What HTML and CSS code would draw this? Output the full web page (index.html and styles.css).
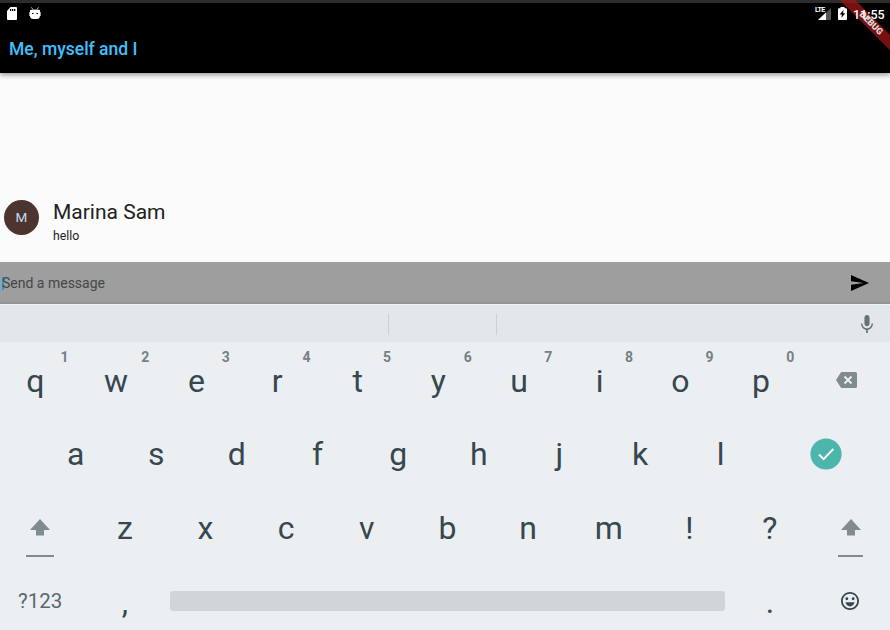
FILE: index.html
```html
<!DOCTYPE html>
<html lang="en">
<head>
<meta charset="utf-8">
<title>Me, myself and I</title>
<link rel="stylesheet" href="styles.css">
</head>
<body>
<div class="screen">
  <header class="appbar">
    <div class="status">
      <svg class="sd" width="10" height="13" viewBox="0 0 10 13"><path d="M3.500 0H9q1 0 1 1v11q0 1-1 1H1q-1 0-1-1V4z" fill="#fff"/><path d="M3 2h1.300v2H3zM5 2h1.300v2H5zM7 2h1.300v2H7z" fill="#000"/></svg>
      <svg class="droid" width="12" height="13" viewBox="0 0 12 13"><path d="M2.500.3l1.400 2.300M9.500.3L8.100 2.600" stroke="#bbb" fill="none"/><path d="M1 3q5-1.200 10 0v5.500Q11 12 7.500 12h-3Q1 12 1 8.500z" fill="#fff"/><path d="M.5 5v4M11.500 5v4" stroke="#aaa" stroke-width=".9"/><path d="M3 6h1.500v1H3zM7.500 6H9v1H7.500z" fill="#000"/></svg>
      <span class="grow"></span>
      <span class="lte">LTE</span>
      <svg class="signal" width="13" height="12" viewBox="0 0 13 13" preserveAspectRatio="none"><path d="M13 0v13H0z" fill="#555"/><path d="M8 5v8H0z" fill="#fff"/></svg>
      <svg class="battery" width="9" height="13" viewBox="0 0 9 13"><path d="M2.500 0h4v1.300H8q1 0 1 1V12q0 1-1 1H1q-1 0-1-1V2.300q0-1 1-1h1.500z" fill="#fff"/><path d="M5.600 2.800L1.700 7.500h2.200L3.400 11l3.800-4.800H5z" fill="#000"/></svg>
      <span class="clock">11:55</span>
    </div>
    <h1>Me, myself and I</h1>
    <div class="debug">DEBUG</div>
  </header>
  <main class="chat">
    <div class="avatar">M</div>
    <div class="message"><div class="name">Marina Sam</div><div class="text">hello</div></div>
  </main>
  <div class="composer">
    <span class="caret"></span><span class="hint">Send a message</span>
    <svg width="18" height="16" viewBox="2 3 21 18" preserveAspectRatio="none"><path d="M2.010 21L23 12 2.010 3 2 10l15 2-15 2z"/></svg>
  </div>
  <section class="keyboard">
    <div class="suggest">
      <i></i><i></i>
      <svg width="12" height="18" viewBox="5 2 14 19" preserveAspectRatio="none"><path fill="#657379" d="M12 14c1.660 0 2.990-1.340 2.990-3L15 5c0-1.660-1.340-3-3-3S9 3.340 9 5v6c0 1.660 1.340 3 3 3zm5.300-3c0 3-2.540 5.100-5.300 5.100S6.700 14 6.700 11H5c0 3.410 2.720 6.230 6 6.720V21h2v-3.280c3.280-.48 6-3.300 6-6.720h-1.700z"/></svg>
    </div>
    <div class="row first">
      <b>q<sup>1</sup></b><b>w<sup>2</sup></b><b>e<sup>3</sup></b><b>r<sup>4</sup></b><b>t<sup>5</sup></b><b>y<sup>6</sup></b><b>u<sup>7</sup></b><b>i<sup>8</sup></b><b>o<sup>9</sup></b><b>p<sup>0</sup></b>
      <svg class="back" width="21" height="16" viewBox="0 0 21 16"><path fill="#808b8f" d="M6 0h13.500Q21 0 21 1.500v13q0 1.500-1.500 1.500H6Q5 16 4.500 15L0 8l4.500-7Q5 0 6 0z"/><path d="M8.500 4.500l7 7m0-7l-7 7" stroke="#ebeff2" stroke-width="1.900"/></svg>
    </div>
    <div class="row second">
      <b>a</b><b>s</b><b>d</b><b>f</b><b>g</b><b>h</b><b>j</b><b>k</b><b>l</b>
      <svg class="enter" width="32" height="32" viewBox="0 0 32 32"><circle cx="16" cy="16" r="15.600" fill="#4db6ac"/><path d="M9 16.500l4.600 4.700L23.300 11" fill="none" stroke="#fff" stroke-width="1.900"/></svg>
    </div>
    <div class="row third">
      <span class="shift"><svg width="20" height="17" viewBox="0 0 20 17"><path fill="#808b8f" d="M10 0l10 11h-6v5.500H6V11H0z"/></svg></span>
      <b>z</b><b>x</b><b>c</b><b>v</b><b>b</b><b>n</b><b>m</b><b>!</b><b>?</b>
      <span class="shift right"><svg width="20" height="17" viewBox="0 0 20 17"><path fill="#808b8f" d="M10 0l10 11h-6v5.500H6V11H0z"/></svg></span>
    </div>
    <div class="row fourth">
      <span class="symbols">?123</span><b>,</b><span class="space"></span><b>.</b>
      <svg class="smile" width="18" height="18" viewBox="2 2 20 20"><path fill="#37474f" d="M11.990 2C6.470 2 2 6.480 2 12s4.470 10 9.990 10C17.520 22 22 17.520 22 12S17.520 2 11.990 2zM12 20c-4.420 0-8-3.580-8-8s3.580-8 8-8 8 3.580 8 8-3.580 8-8 8z"/><path fill="#37474f" d="M7 13.500h10c-.6 3-2.600 4.500-5 4.500s-4.400-1.500-5-4.500z"/><circle cx="8.500" cy="9.500" r="1.600" fill="#37474f"/><circle cx="15.500" cy="9.500" r="1.600" fill="#37474f"/></svg>
    </div>
  </section>
</div>
</body>
</html>
```
FILE: styles.css
```css
* { box-sizing: border-box; }
body { margin: 0; font-family: Roboto, sans-serif; }
svg { display: block; flex: none; }
.screen { width: 890px; height: 630px; overflow: hidden; display: flex; flex-direction: column; background: #fbfbfb; }
.appbar { position: relative; z-index: 1; flex: none; height: 73px; background: #000; border-top: 3px solid #2c2c2c; box-shadow: 0 2px 5px rgba(0,0,0,.4); clip-path: inset(0 0 -12px 0); }
.status { height: 24px; display: flex; align-items: flex-start; padding: 4px 6px 0 7px; color: #fff; }
.droid { margin-left: 11.500px; margin-top: -.5px; }
.grow { flex: 1; }
.lte { font-size: 7px; line-height: 7px; font-weight: 700; width: 3px; white-space: nowrap; letter-spacing: -.6px; }
.signal { margin-top: 1px; }
.battery { margin-left: 7px; }
.clock { position: relative; z-index: 2; width: 31px; margin-left: 6px; font-size: 12.500px; line-height: 15px; font-weight: 500; white-space: nowrap; }
h1 { margin: 12px 0 0 9px; font-size: 17.500px; line-height: 21px; font-weight: 500; color: #40c0ff; }
.debug { position: absolute; left: 831px; top: 14.500px; width: 80px; height: 11px; background: rgba(160,22,22,.75); transform: rotate(45deg); color: #ddd; font-size: 9px; line-height: 11px; font-weight: 900; text-align: center; }
.chat { flex: none; height: 189px; padding: 127px 0 0 4px; display: flex; align-items: flex-start; }
.avatar { width: 35px; height: 35px; border-radius: 50%; background: #4e342e; color: #bbdefb; font-size: 13.500px; line-height: 35px; text-align: center; }
.message { margin-left: 14px; color: #212121; }
.name { font-size: 21px; line-height: 24px; }
.text { margin-top: 4px; font-size: 12.300px; line-height: 16px; }
.composer { flex: none; height: 42px; padding: 0 21px 0 2px; display: flex; align-items: center; background: linear-gradient(#9e9e9e 92%, #8f8f8f); color: #474747; }
.caret { width: 2px; height: 13px; background: #2196f3; margin-right: -2px; flex: none; }
.hint { flex: 1; font-size: 14px; line-height: 20px; }
.keyboard { flex: none; height: 326px; background: #ebeff2; }
.suggest { height: 38px; border-top: 1px solid #f0f3f4; background: #e3e7ea; display: flex; align-items: center; padding: 2px 17px 0 388px; }
.suggest i { width: 1px; height: 21px; background: #cbd0d3; margin-right: 107px; }
.suggest svg { margin-left: auto; margin-top: -2px; }
.row { display: flex; height: 73.700px; color: #37474f; }
.row b { position: relative; flex: none; width: 80.640px; text-align: center; font-weight: 400; font-size: 32px; line-height: 78px; }
.row.second b { line-height: 76px; }
sup { position: absolute; left: 65.500px; top: 7px; font-size: 14px; line-height: 16px; font-weight: 700; color: #738085; }
.first { margin-left: -5px; }
.back { margin: 30px 0 0 35px; }
.second { padding-left: 35.300px; }
.enter { margin: 22px 0 0 49.500px; }
.shift { flex: none; width: 28px; margin: 30px 18px 0 26px; height: 38px; border-bottom: 2px solid #808b8f; display: flex; justify-content: center; align-self: flex-start; }
.third b:nth-of-type(1) { margin-left: 12.600px; }
.shift.right { width: 25px; margin: 30px 0 0 27.900px; }
.fourth { height: 67px; }
.symbols { width: 84.500px; padding-left: 18px; font-size: 20.500px; line-height: 77px; color: #59686e; }
.space { width: 555px; height: 20px; margin: 28px 0 0 5px; background: #d0d5d8; border-radius: 3px; }
.fourth b:last-of-type { margin-left: 4.500px; }
.smile { margin: 29px 0 0 30.500px; }
```
